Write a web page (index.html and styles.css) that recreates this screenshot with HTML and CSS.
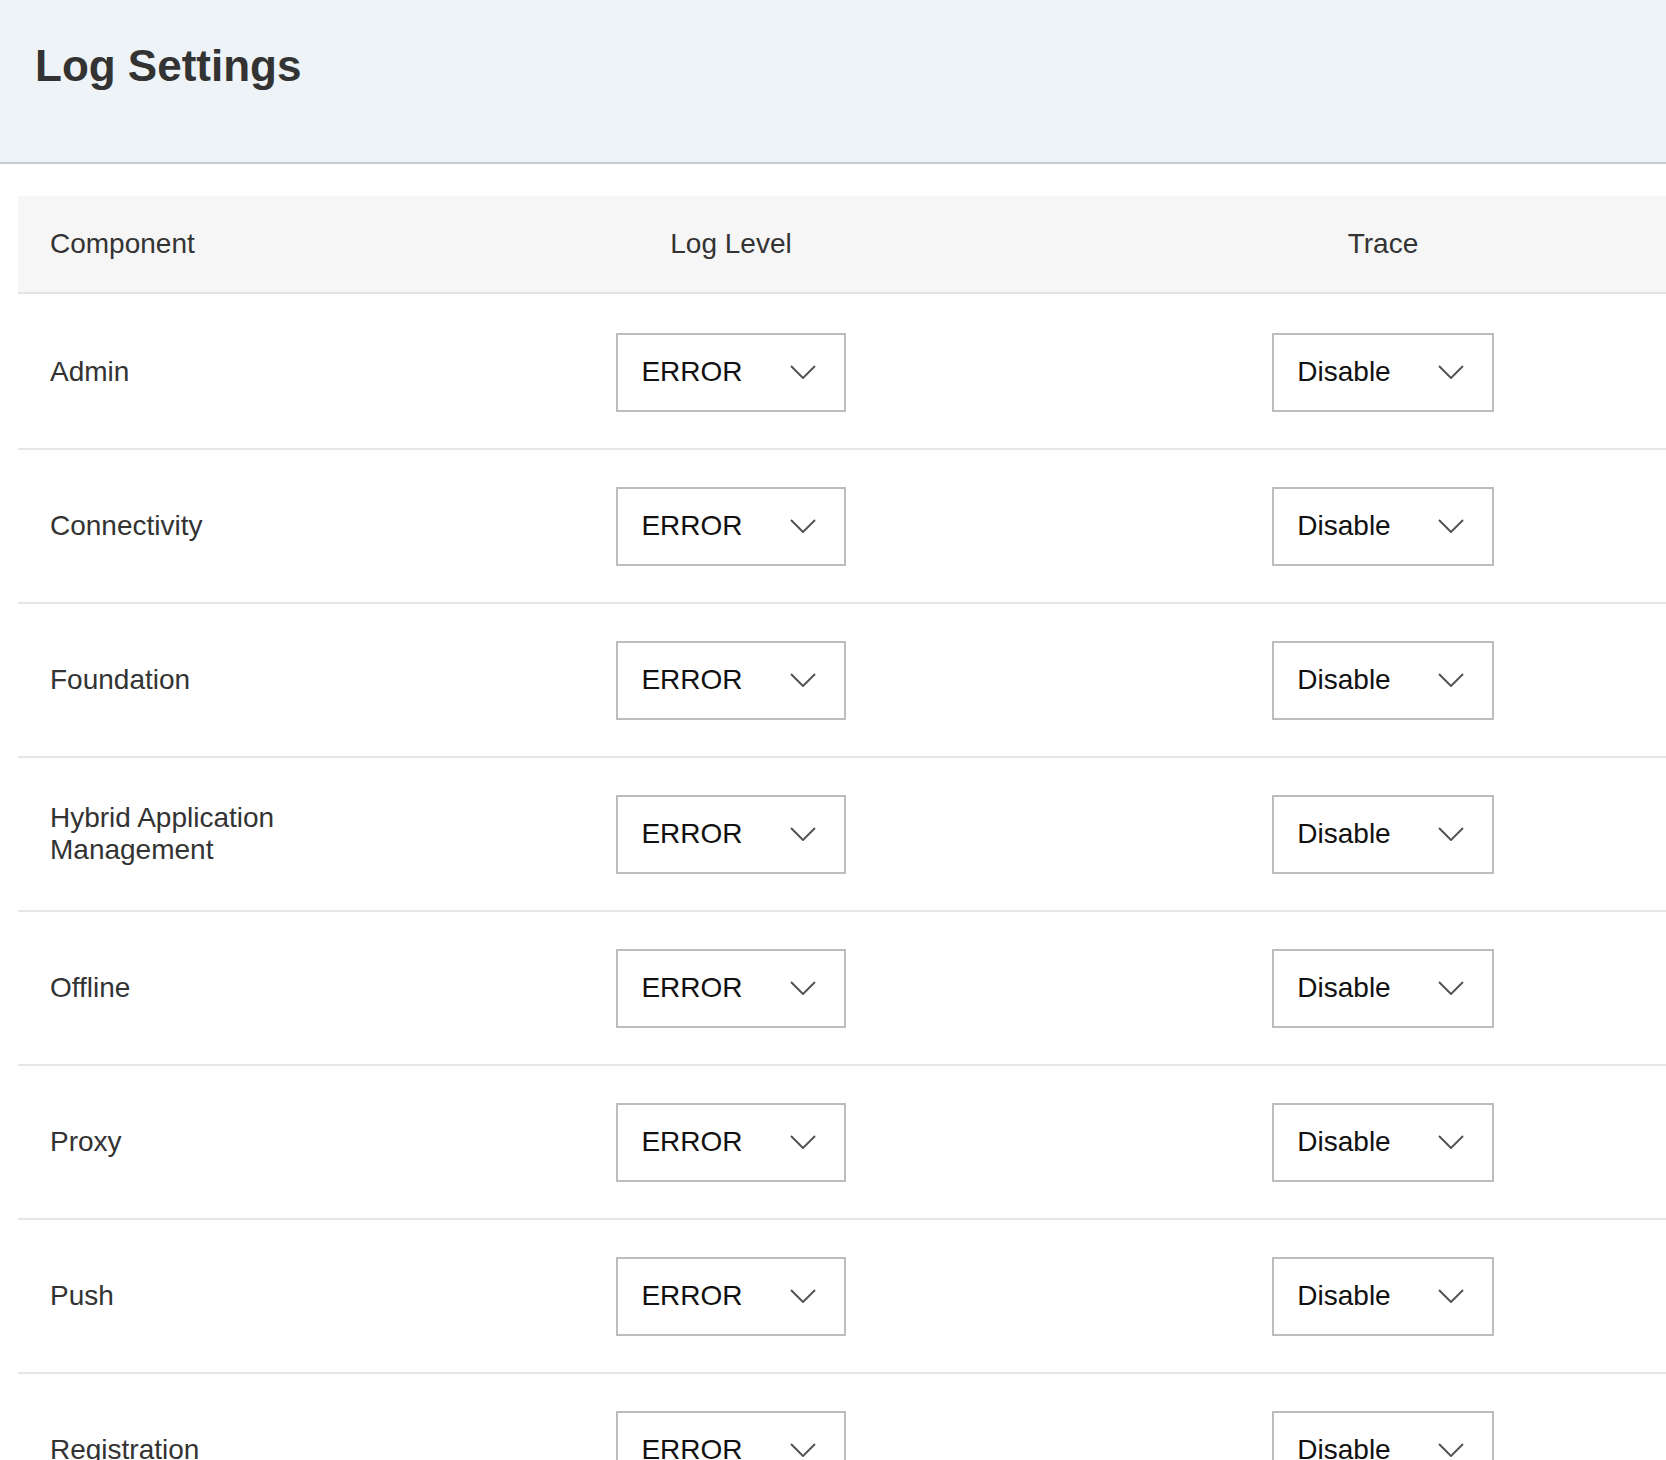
FILE: index.html
```html
<!DOCTYPE html>
<html lang="en">
<head>
<meta charset="utf-8">
<title>Log Settings</title>
<link rel="stylesheet" href="styles.css">
</head>
<body>
<header class="page-header">
  <h1 class="page-title">Log Settings</h1>
</header>
<main class="content">
  <div class="log-table">
    <div class="row head">
      <div class="cell name">Component</div>
      <div class="cell center">Log Level</div>
      <div class="cell center">Trace</div>
    </div>

    <div class="row">
      <div class="cell name">Admin</div>
      <div class="cell center"><div class="select"><span>ERROR</span><svg class="chev" width="26" height="14" viewBox="0 0 26 14"><polyline points="1,1 13,13 25,1"/></svg></div></div>
      <div class="cell center"><div class="select"><span>Disable</span><svg class="chev" width="26" height="14" viewBox="0 0 26 14"><polyline points="1,1 13,13 25,1"/></svg></div></div>
    </div>

    <div class="row">
      <div class="cell name">Connectivity</div>
      <div class="cell center"><div class="select"><span>ERROR</span><svg class="chev" width="26" height="14" viewBox="0 0 26 14"><polyline points="1,1 13,13 25,1"/></svg></div></div>
      <div class="cell center"><div class="select"><span>Disable</span><svg class="chev" width="26" height="14" viewBox="0 0 26 14"><polyline points="1,1 13,13 25,1"/></svg></div></div>
    </div>

    <div class="row">
      <div class="cell name">Foundation</div>
      <div class="cell center"><div class="select"><span>ERROR</span><svg class="chev" width="26" height="14" viewBox="0 0 26 14"><polyline points="1,1 13,13 25,1"/></svg></div></div>
      <div class="cell center"><div class="select"><span>Disable</span><svg class="chev" width="26" height="14" viewBox="0 0 26 14"><polyline points="1,1 13,13 25,1"/></svg></div></div>
    </div>

    <div class="row">
      <div class="cell name">Hybrid Application Management</div>
      <div class="cell center"><div class="select"><span>ERROR</span><svg class="chev" width="26" height="14" viewBox="0 0 26 14"><polyline points="1,1 13,13 25,1"/></svg></div></div>
      <div class="cell center"><div class="select"><span>Disable</span><svg class="chev" width="26" height="14" viewBox="0 0 26 14"><polyline points="1,1 13,13 25,1"/></svg></div></div>
    </div>

    <div class="row">
      <div class="cell name">Offline</div>
      <div class="cell center"><div class="select"><span>ERROR</span><svg class="chev" width="26" height="14" viewBox="0 0 26 14"><polyline points="1,1 13,13 25,1"/></svg></div></div>
      <div class="cell center"><div class="select"><span>Disable</span><svg class="chev" width="26" height="14" viewBox="0 0 26 14"><polyline points="1,1 13,13 25,1"/></svg></div></div>
    </div>

    <div class="row">
      <div class="cell name">Proxy</div>
      <div class="cell center"><div class="select"><span>ERROR</span><svg class="chev" width="26" height="14" viewBox="0 0 26 14"><polyline points="1,1 13,13 25,1"/></svg></div></div>
      <div class="cell center"><div class="select"><span>Disable</span><svg class="chev" width="26" height="14" viewBox="0 0 26 14"><polyline points="1,1 13,13 25,1"/></svg></div></div>
    </div>

    <div class="row">
      <div class="cell name">Push</div>
      <div class="cell center"><div class="select"><span>ERROR</span><svg class="chev" width="26" height="14" viewBox="0 0 26 14"><polyline points="1,1 13,13 25,1"/></svg></div></div>
      <div class="cell center"><div class="select"><span>Disable</span><svg class="chev" width="26" height="14" viewBox="0 0 26 14"><polyline points="1,1 13,13 25,1"/></svg></div></div>
    </div>

    <div class="row">
      <div class="cell name">Registration</div>
      <div class="cell center"><div class="select"><span>ERROR</span><svg class="chev" width="26" height="14" viewBox="0 0 26 14"><polyline points="1,1 13,13 25,1"/></svg></div></div>
      <div class="cell center"><div class="select"><span>Disable</span><svg class="chev" width="26" height="14" viewBox="0 0 26 14"><polyline points="1,1 13,13 25,1"/></svg></div></div>
    </div>
  </div>
</main>
</body>
</html>
```

FILE: styles.css
```css
html, body {
  margin: 0;
  padding: 0;
  overflow: hidden;
  background: #ffffff;
  font-family: "Liberation Sans", Arial, sans-serif;
  color: #333333;
}

.page-header {
  background: #eef3f7;
  border-bottom: 2px solid #c9cccf;
  padding: 40px 0 0 35px;
  box-sizing: content-box;
  height: 122px;
}

.page-title {
  margin: 0;
  font-size: 44px;
  line-height: 52px;
  font-weight: 700;
  color: #333333;
}

.content {
  padding: 32px 0 0 18px;
}

.log-table {
  width: 1691px;
}

.row {
  display: grid;
  grid-template-columns: 387px 652px 652px;
  height: 152px;
  border-bottom: 2px solid #e6e6e6;
  align-items: center;
}

.row.head {
  height: 96px;
  margin-bottom: 2px;
  background: #f6f6f6;
  border-bottom-color: #e4e4e4;
}

.cell {
  font-size: 28px;
  line-height: 32px;
  color: #333333;
}

.cell.name {
  padding-left: 32px;
  padding-right: 24px;
}

.cell.center {
  display: flex;
  justify-content: center;
}

.select {
  box-sizing: border-box;
  height: 79px;
  display: flex;
  align-items: center;
  gap: 47px;
  padding: 0 28px 0 23px;
  border: 2px solid #bdbdbd;
  background: #ffffff;
  color: #111111;
  font-size: 28px;
}

.chev {
  display: block;
  flex: none;
}

.chev polyline {
  fill: none;
  stroke: #555555;
  stroke-width: 2;
}
```
